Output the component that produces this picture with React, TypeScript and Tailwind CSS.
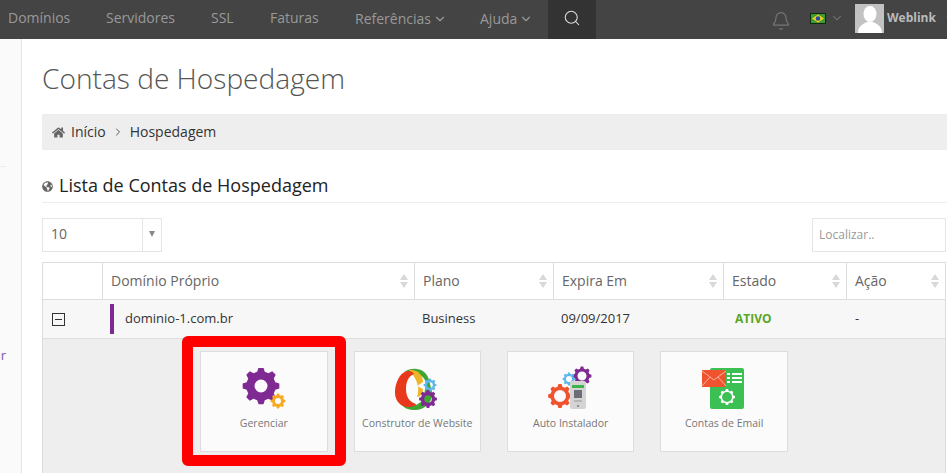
import { ChevronDown, ChevronRight, Search, Bell } from "lucide-react";
import { FaHome, FaGlobeAmericas } from "react-icons/fa";

// gear outline centred on cx,cy, the hole is cut out with evenodd
function gearPath(cx: number, cy: number, r: number, hole: number, teeth = 8) {
  const pts: string[] = [];
  const step = (Math.PI * 2) / teeth;
  for (let i = 0; i < teeth; i++) {
    const a = i * step - Math.PI / 2;
    const outer = [a - step * 0.17, a + step * 0.17];
    const inner = [a + step * 0.33, a + step * 0.67];
    outer.forEach((t) => pts.push(`${cx + r * Math.cos(t)} ${cy + r * Math.sin(t)}`));
    inner.forEach((t) => pts.push(`${cx + r * 0.8 * Math.cos(t)} ${cy + r * 0.8 * Math.sin(t)}`));
  }
  const ring = `M${cx - hole} ${cy}a${hole} ${hole} 0 1 0 ${hole * 2} 0a${hole} ${hole} 0 1 0 ${-hole * 2} 0Z`;
  return `M${pts.join("L")}Z${ring}`;
}

function Gear({ cx, cy, r, hole, fill }: { cx: number; cy: number; r: number; hole: number; fill: string }) {
  return <path d={gearPath(cx, cy, r, hole)} fill={fill} fillRule="evenodd" />;
}

function ManageIcon() {
  return (
    <svg width="44" height="44" viewBox="0 0 44 44">
      <Gear cx={19} cy={18} r={18.5} hole={6.5} fill="#7f2a92" />
      <Gear cx={36} cy={33} r={7.5} hole={3} fill="#f9a91f" />
    </svg>
  );
}

function BuilderIcon() {
  return (
    <svg width="44" height="44" viewBox="0 0 44 44">
      <path d="M9 4C18 -2 31 0 34 12L37 24C38 34 30 42 20 42C14 42 9 40 7 37C16 40 27 37 29 28L31 15C29 7 20 3 9 4Z" fill="#3fa535" />
      <path d="M14 2C23 1 28 7 28 14L22 18L28 21C28 26 25 29 22 29C24 24 25 14 14 2Z" fill="#f0b429" />
      <path d="M14 3C5 3 0 15 0 25C0 33 6 39 13 39C19 39 21 37 21 36C14 34 11 28 11 21C11 13 14 8 19 6C18 4 16 3 14 3Z" fill="#e8391c" />
      <Gear cx={35} cy={17} r={6.5} hole={2.8} fill="#5bb8ec" />
      <Gear cx={33} cy={31} r={9} hole={3.8} fill="#7f2a92" />
    </svg>
  );
}

function InstallerIcon() {
  return (
    <svg width="44" height="44" viewBox="0 0 44 44" className="overflow-visible">
      <Gear cx={33} cy={8} r={9.5} hole={4.5} fill="#7f2a92" />
      <Gear cx={20} cy={11} r={6.5} hole={3} fill="#5bb8ec" />
      <Gear cx={11} cy={28} r={12} hole={6} fill="#f0532d" />
      <rect x="21" y="13" width="16" height="28" rx="2" fill="#d4d4d4" />
      <rect x="23" y="17" width="12" height="3" fill="#3cb44b" />
      <rect x="25" y="22" width="8" height="8" fill="#6d6d78" />
      <rect x="25" y="32" width="8" height="2" fill="#b5b5b5" />
      <circle cx="29" cy="38" r="1" fill="#777" />
    </svg>
  );
}

function EmailIcon() {
  return (
    <svg width="44" height="44" viewBox="0 0 44 44">
      <rect x="8" y="0" width="34" height="41" rx="2" fill="#3cc054" />
      <rect x="30" y="5" width="10" height="2" fill="#fff" />
      <rect x="30" y="9" width="10" height="2" fill="#fff" />
      <rect x="30" y="13" width="10" height="2" fill="#fff" />
      <rect x="25" y="5" width="3" height="2" fill="#fff" />
      <rect x="25" y="9" width="3" height="2" fill="#fff" />
      <rect x="25" y="13" width="3" height="2" fill="#fff" />
      <rect x="0" y="2" width="24" height="17" fill="#f0532d" />
      <path d="M0 3L12 12L24 3M0 18L8 9M24 18L16 9" fill="none" stroke="#f9b7a3" strokeWidth="1" />
      <Gear cx={25} cy={29} r={8} hole={5} fill="#fff" />
    </svg>
  );
}

function SortArrows() {
  return (
    <svg width="8" height="16" viewBox="0 0 8 16" className="shrink-0">
      <path d="M4 1L8 7H0Z" fill="#d8d8d8" />
      <path d="M4 15L8 9H0Z" fill="#d8d8d8" />
    </svg>
  );
}

function BrazilFlag() {
  return (
    <svg width="16" height="11" viewBox="0 0 16 11">
      <rect width="16" height="11" fill="#0c2a0c" />
      <rect x="1" y="1" width="14" height="9" fill="#3f9c35" />
      <path d="M8 1.6L14 5.5L8 9.4L2 5.5Z" fill="#f2d21c" />
      <circle cx="8" cy="5.5" r="2.3" fill="#2b49a0" />
    </svg>
  );
}

function Avatar() {
  return (
    <svg width="29" height="29" viewBox="0 0 29 29" className="block">
      <rect width="29" height="29" fill="#c2c2c2" />
      <ellipse cx="15" cy="10" rx="6.5" ry="8" fill="#fff" />
      <path d="M3 29C3 22 8 20 12 18H18C22 20 27 22 27 29Z" fill="#fff" />
    </svg>
  );
}

const navItems = [
  { label: "Domínios", w: "w-[98px]" },
  { label: "Servidores", w: "w-[105px]" },
  { label: "SSL", w: "w-[59px]" },
  { label: "Faturas", w: "w-[85px]" },
];

const columns = [
  { label: "Domínio Próprio", w: "w-[312px]" },
  { label: "Plano", w: "w-[139px]" },
  { label: "Expira Em", w: "w-[170px]" },
  { label: "Estado", w: "w-[123px]" },
  { label: "Ação", w: "flex-1" },
];

const tools = [
  { label: "Gerenciar", icon: <ManageIcon /> },
  { label: "Construtor de Website", icon: <BuilderIcon /> },
  { label: "Auto Instalador", icon: <InstallerIcon /> },
  { label: "Contas de Email", icon: <EmailIcon /> },
];

export default function App() {
  return (
    <div className="relative w-[947px] h-[473px] overflow-hidden bg-white font-['Open_Sans',sans-serif] text-[#333]">
      {/* Topo */}
      <nav className="flex h-[39px] items-center overflow-hidden bg-[#444444] pl-2 text-sm leading-[35px] text-[#999999]">
        {navItems.map((item) => (
          <span key={item.label} className={`${item.w} h-full shrink-0`}>
            {item.label}
          </span>
        ))}
        <span className="flex h-full w-[125px] shrink-0 items-center pb-[3px]">
          Referências
          <ChevronDown className="ml-0.5 mt-0.5 h-3.5 w-3.5" strokeWidth={2} />
        </span>
        <span className="flex h-full w-[68px] shrink-0 items-center pb-[3px]">
          Ajuda
          <ChevronDown className="ml-0.5 mt-0.5 h-3.5 w-3.5" strokeWidth={2} />
        </span>
        <span className="flex h-full w-[48px] shrink-0 items-center justify-center bg-[#333333] pb-[3px]">
          <Search className="h-[18px] w-[18px] text-[#dddddd]" strokeWidth={1.4} />
        </span>
        <Bell className="ml-[175px] mt-[2px] h-5 w-5 shrink-0 text-[#777777]" strokeWidth={1.4} />
        <span className="ml-[19px] flex h-full w-[45px] shrink-0 items-center pb-[3px]">
          <BrazilFlag />
          <ChevronDown className="ml-1 h-3.5 w-3.5 text-[#777777]" strokeWidth={1.75} />
        </span>
        <span className="flex h-full shrink-0 items-end pb-[6px] pt-1">
          <Avatar />
        </span>
        <span className="ml-[3px] mb-[4px] shrink-0 text-xs font-bold leading-none text-[#bbbbbb]">Weblink</span>
        <ChevronDown className="ml-[8px] mb-[4px] h-3 w-3 shrink-0 text-[#777777]" strokeWidth={2} />
      </nav>

      <div className="flex h-[434px]">
        {/* Barra lateral */}
        <aside className="w-[22px] shrink-0 border-r border-[#e3e3e3] bg-[#fafafa] pt-[127px]">
          <div className="h-px w-[6px] bg-[#eeeeee]" />
          <div className="mt-[182px] pr-[15px] text-right text-[13px] leading-none text-[#7a5ba8]">r</div>
        </aside>

        {/* Conteúdo */}
        <main className="min-w-0 flex-1 pl-5">
          <h1 className="mt-[19px] text-[28.1px] font-light leading-10 text-[#555555]">Contas de Hospedagem</h1>

          <div className="mt-4 flex h-9 items-center bg-[#eeeeee] pl-[10px] text-sm">
            <FaHome className="h-[13px] w-[13px] text-[#666666]" />
            <span className="ml-[6px]">Início</span>
            <ChevronRight className="mx-[6px] h-3 w-3 text-[#555555]" strokeWidth={2} />
            <span>Hospedagem</span>
          </div>

          <h2 className="mt-[24px] flex h-[29px] items-start border-b border-[#eeeeee] text-lg font-normal leading-[23px] text-[#222222]">
            <FaGlobeAmericas className="mr-[6px] mt-[7px] h-[11px] w-[11px] text-[#666666]" />
            Lista de Contas de Hospedagem
          </h2>

          <div className="mt-[15px] flex h-[34px] justify-between">
            <div className="flex w-[120px] border border-[#e5e5e5] text-sm text-[#666666]">
              <span className="flex flex-1 items-center border-r border-[#e5e5e5] pb-0.5 pl-2">10</span>
              <span className="flex w-[18px] justify-center pt-3">
                <svg width="6" height="6" viewBox="0 0 6 6">
                  <path d="M0 0H6L3 6Z" fill="#888888" />
                </svg>
              </span>
            </div>
            <div className="mr-px flex w-[134px] items-center border border-[#e5e5e5] pl-1.5 text-xs text-[#999999]">
              Localizar..
            </div>
          </div>

          {/* Tabela */}
          <div className="mt-[10px] mr-px border-x border-t border-[#dddddd]">
            <div className="flex h-[37px] border-b border-[#dddddd] text-sm text-[#666666]">
              <div className="w-[60px] border-r border-[#dddddd]" />
              {columns.map((col, i) => (
                <div
                  key={col.label}
                  className={`flex items-center justify-between pl-2 pr-[6px] ${col.w} ${i < 4 ? "border-r border-[#dddddd]" : ""}`}
                >
                  {col.label}
                  <SortArrows />
                </div>
              ))}
            </div>
            <div className="flex h-[39px] items-center border-b border-[#dddddd] bg-[#f7f7f7] text-[13px] text-[#333333]">
              <div className="flex w-[60px] pl-[9px]">
                <span className="relative h-[13px] w-[13px] border border-[#333333]">
                  <span className="absolute left-[2px] top-[5px] h-px w-[7px] bg-[#333333]" />
                </span>
              </div>
              <div className="flex h-full w-[312px] items-center pl-[7px]">
                <span className="h-[30px] w-1 bg-[#7f2a92]" />
                <span className="ml-[11px]">dominio-1.com.br</span>
              </div>
              <div className="w-[139px] pl-[7px]">Business</div>
              <div className="w-[170px] pl-[7px]">09/09/2017</div>
              <div className="w-[123px] pl-[11px] text-xs font-bold text-[#5aa61f]">ATIVO</div>
              <div className="pl-2">-</div>
            </div>
            <div className="flex h-[135px] gap-[26px] bg-[#eeeeee] pl-[157.1px] pt-3">
              {tools.map((tool) => (
                <div
                  key={tool.label}
                  className="flex h-[101px] w-[127.45px] flex-col items-center border border-[#dddddd] bg-[#fbfbfb] text-[10.5px] text-[#777777]"
                >
                  <div className="mt-4 h-[44px]">{tool.icon}</div>
                  <span className="mt-[3px] whitespace-nowrap leading-[16px]">{tool.label}</span>
                </div>
              ))}
            </div>
          </div>
        </main>
      </div>

      {/* Destaque sobre o botão Gerenciar */}
      <div className="absolute left-[182px] top-[336px] h-[130px] w-[164px] rounded-md border-[11px] border-[#ff0000]" />
    </div>
  );
}
